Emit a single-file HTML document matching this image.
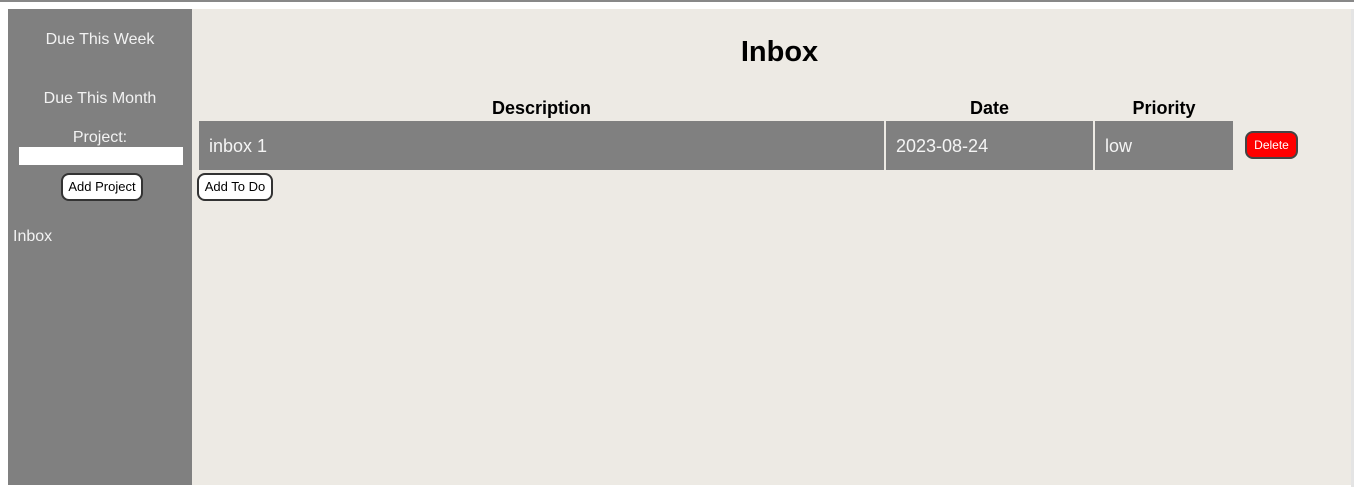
<!DOCTYPE html>
<html><head><style>
body{margin:0;width:1354px;height:487px;background:#fff;position:relative;overflow:hidden;font-family:"Liberation Sans",sans-serif}
.a{position:absolute}
.topl{left:0;top:0;width:1354px;height:2px;background:#888}
.side{left:8px;top:9px;width:184px;height:476px;background:#808080;color:#f2f2f2}
.main{left:192px;top:9px;width:1159px;height:476px;background:#edeae4}
.rb{left:1351px;top:9px;width:3px;height:478px;background:#e4e4e4}
.c{text-align:center;width:184px;font-size:16px}
.cell{background:#808080;color:#f4f4f4;font-size:18px;height:49px;line-height:51px;top:121px;box-sizing:border-box;padding-left:10px}
.h{font-weight:bold;font-size:18px;top:98px;text-align:center}
.btn{background:#fff;border:2px solid #333;border-radius:8px;font-size:13px;text-align:center;box-sizing:border-box;color:#000}
</style></head><body>
<div class="a topl"></div>
<div class="a main"></div>
<div class="a rb"></div>
<div class="a side">
<div class="a c" style="top:22px">Due This Week</div>
<div class="a c" style="top:81px">Due This Month</div>
<div class="a c" style="top:120px">Project:</div>
<div class="a" style="left:11px;top:138px;width:164px;height:18px;background:#fff"></div>
<div class="a btn" style="left:53px;top:164px;width:82px;height:28px;line-height:24px">Add Project</div>
<div class="a" style="left:5px;top:219px;font-size:16px">Inbox</div>
</div>
<div class="a" style="left:192px;top:36px;width:1175px;text-align:center;font-size:29px;font-weight:bold">Inbox</div>
<div class="a h" style="left:199px;width:685px">Description</div>
<div class="a h" style="left:886px;width:207px">Date</div>
<div class="a h" style="left:1095px;width:138px">Priority</div>
<div class="a cell" style="left:199px;width:685px">inbox 1</div>
<div class="a cell" style="left:886px;width:207px">2023-08-24</div>
<div class="a cell" style="left:1095px;width:138px">low</div>
<div class="a btn" style="left:1245px;top:131px;width:53px;height:28px;line-height:25px;background:#f00;color:#fff;border-color:#444;font-size:12px">Delete</div>
<div class="a btn" style="left:197px;top:173px;width:76px;height:28px;line-height:24px">Add To Do</div>
</body></html>
